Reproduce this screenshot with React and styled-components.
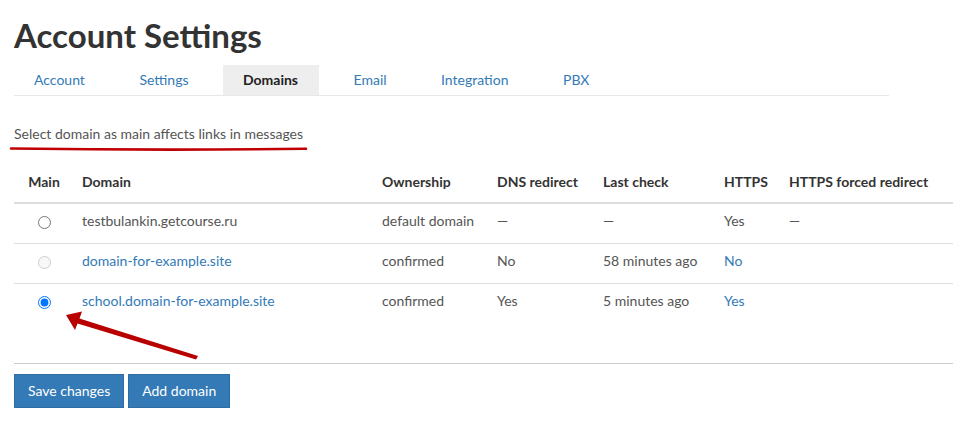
import React, { useState } from 'react'
import styled, { createGlobalStyle } from 'styled-components'

const GlobalStyle = createGlobalStyle`
  body {
    margin: 0;
    background: #fff;
    font-family: Lato, "Open Sans", Arial, sans-serif;
    font-size: 14px;
    color: #555;
  }
`

const tabs = ['Account', 'Settings', 'Domains', 'Email', 'Integration', 'PBX']

const domains = [
  { name: 'testbulankin.getcourse.ru', link: false, owner: 'default domain', dns: '—', check: '—', https: 'Yes', httpsLink: false, forced: '—' },
  { name: 'domain-for-example.site', link: true, owner: 'confirmed', dns: 'No', check: '58 minutes ago', https: 'No', httpsLink: true, forced: '', disabled: true },
  { name: 'school.domain-for-example.site', link: true, owner: 'confirmed', dns: 'Yes', check: '5 minutes ago', https: 'Yes', httpsLink: true, forced: '' },
]

function App() {
  const [main, setMain] = useState(2)

  return (
    <Page>
      <GlobalStyle />
      <Title>Account Settings</Title>
      <Tabs>
        {tabs.map((t) => (
          <Tab key={t} active={t === 'Domains'}>{t}</Tab>
        ))}
      </Tabs>

      <Hint>Select domain as main affects links in messages</Hint>

      <Table>
        <colgroup>
          <col style={{ width: 60 }} />
          <col style={{ width: 300 }} />
          <col style={{ width: 115 }} />
          <col style={{ width: 106 }} />
          <col style={{ width: 121 }} />
          <col style={{ width: 65 }} />
          <col />
        </colgroup>
        <thead>
          <tr>
            <Th center>Main</Th>
            <Th>Domain</Th>
            <Th>Ownership</Th>
            <Th>DNS redirect</Th>
            <Th>Last check</Th>
            <Th>HTTPS</Th>
            <Th>HTTPS forced redirect</Th>
          </tr>
        </thead>
        <tbody>
          {domains.map((d, i) => (
            <Row key={d.name} last={i === domains.length - 1}>
              <Td center>
                <Radio
                  type="radio"
                  name="main"
                  disabled={d.disabled}
                  checked={main === i}
                  onChange={() => setMain(i)}
                />
              </Td>
              <Td>{d.link ? <Link href="#">{d.name}</Link> : d.name}</Td>
              <Td>{d.owner}</Td>
              <Td>{d.dns}</Td>
              <Td>{d.check}</Td>
              <Td>{d.httpsLink ? <Link href="#">{d.https}</Link> : d.https}</Td>
              <Td>{d.forced}</Td>
            </Row>
          ))}
        </tbody>
      </Table>

      <Divider />

      <Actions>
        <Button>Save changes</Button>
        <Button>Add domain</Button>
      </Actions>

      {/* red annotation marks drawn over the screenshot */}
      <Marks width="969" height="432" viewBox="0 0 969 432">
        <path d="M11 148.5 Q160 150.5 306 148.8" stroke="#c00000" strokeWidth="2.6" fill="none" strokeLinecap="round" />
        <polygon points="66,315 82,311.5 79.5,318.5 198,356 196,359.5 77.5,323.5 75,330" fill="#b80000" />
      </Marks>
    </Page>
  )
}

export default App

const Page = styled.div`
  position: relative;
  padding: 16px 14px 20px;
  width: 939px;
`
const Title = styled.h1`
  margin: 0 0 11px;
  font-size: 33px;
  line-height: 38px;
  font-weight: 700;
  color: #333;
`
const Tabs = styled.ul`
  display: flex;
  list-style: none;
  margin: 0;
  padding: 0;
  width: 875px;
  border-bottom: 1px solid #e8e8e8;
`
const Tab = styled.li`
  height: 30px;
  line-height: 29px;
  padding: 0 ${(p) => (p.active ? '21px' : '20px')} 0 20px;
  margin-right: 14.5px;
  color: ${(p) => (p.active ? '#222' : '#337ab7')};
  font-weight: ${(p) => (p.active ? 700 : 400)};
  background: ${(p) => (p.active ? '#eeeeee' : 'transparent')};
  cursor: pointer;
`
const Hint = styled.p`
  margin: 28px 0 18px;
  line-height: 20px;
  color: #555;
`
const Table = styled.table`
  width: 939px;
  border-collapse: collapse;
  table-layout: fixed;
`
const Th = styled.th`
  padding: 10px 8px;
  line-height: 20px;
  text-align: ${(p) => (p.center ? 'center' : 'left')};
  color: #333;
  font-weight: 700;
  border-bottom: 2px solid #dddddd;
  white-space: nowrap;
`
const Row = styled.tr`
  border-bottom: ${(p) => (p.last ? 'none' : '1px solid #dddddd')};
`
const Td = styled.td`
  padding: 7px 8px 12px;
  line-height: 20px;
  text-align: ${(p) => (p.center ? 'center' : 'left')};
  vertical-align: middle;
  white-space: nowrap;
`
const Radio = styled.input`
  margin: 0;
  width: 13px;
  height: 13px;
  vertical-align: middle;
`
const Link = styled.a`
  color: #337ab7;
  text-decoration: none;
`
const Divider = styled.hr`
  margin: 40px 0 10px;
  border: 0;
  border-top: 1px solid #cccccc;
`
const Actions = styled.div`
  display: flex;
  gap: 4px;
`
const Button = styled.button`
  padding: 6px 13px;
  font-family: inherit;
  font-size: 14px;
  line-height: 20px;
  color: #fff;
  background: #337ab7;
  border: 1px solid #2e6da4;
  border-radius: 0;
  cursor: pointer;
`
const Marks = styled.svg`
  position: absolute;
  top: 0;
  left: 0;
  pointer-events: none;
`
